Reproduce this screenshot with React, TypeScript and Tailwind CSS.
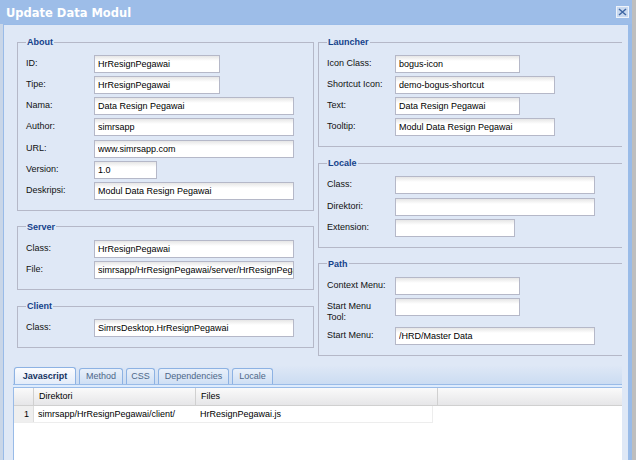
import React from 'react';

interface FieldProps {
  label: string;
  value?: string;
  w: string;
}

const inputCls =
  'h-[18px] shrink-0 border border-[#b5b8c8] bg-[linear-gradient(to_bottom,#e6e6e6,#ffffff_5px)] pl-[3px] text-[9px] text-black outline-none';

const Field: React.FC<FieldProps> = ({ label, value = '', w }) => (
  <div className="flex items-start">
    <label className="w-[68px] shrink-0 pr-[5px] pt-[3px] leading-[11.5px] text-[#111]">{label}</label>
    <input readOnly value={value} className={`${inputCls} ${w}`} />
  </div>
);

const FieldSet: React.FC<{ title: string; right?: boolean; children: React.ReactNode }> = ({ title, right, children }) => (
  <fieldset
    className={`mb-[10px] border border-[#b5b8c8] px-[8px] pt-[7px] pb-[10px] ${right ? 'border-r-0' : ''}`}
  >
    <legend className="px-[1px] text-[9px] font-bold leading-[12px] text-[#15428b]">{title}</legend>
    <div className="flex flex-col gap-[3.17px]">{children}</div>
  </fieldset>
);

const tabs = [
  { name: 'Javascript', w: 'w-[62px]' },
  { name: 'Method', w: 'w-[44px]' },
  { name: 'CSS', w: 'w-[29px]' },
  { name: 'Dependencies', w: 'w-[71px]' },
  { name: 'Locale', w: 'w-[41px]' },
];

const App: React.FC = () => {
  return (
    <div className="flex h-[460px] w-[636px] overflow-hidden bg-[#bebebe] font-['Liberation_Sans',Arial,sans-serif] text-[9px]">
      <div className="flex w-[632px] flex-col bg-[#c9d6e8]">
        {/* title bar */}
        <div className="flex h-[24px] shrink-0 items-start justify-between bg-[#9dbde8] pl-[6px] pt-[2px]">
          <span className="font-['DejaVu_Sans',sans-serif] text-[11.5px] font-bold leading-[22px] text-white">
            Update Data Modul
          </span>
          <div className="mr-[3px] mt-[4px] flex h-[12px] w-[13px] items-center justify-center border border-[#eef3fa] bg-[#c8d9f0]">
            <svg width="9" height="8" viewBox="0 0 9 8">
              <path d="M1 1 L8 7 M8 1 L1 7" stroke="#3f66a3" strokeWidth="1.5" />
            </svg>
          </div>
        </div>

        {/* body */}
        <div className="ml-[3px] flex flex-1 flex-col overflow-hidden border-l border-t border-r-[4px] border-[#99bbe8] bg-[#dfe8f6]">
          <div className="flex h-[340px] shrink-0 gap-[4px] overflow-hidden pl-[13px] pt-[11px]">
            <div className="flex w-[297px] shrink-0 flex-col">
              <FieldSet title="About">
                <Field label="ID:" value="HrResignPegawai" w="w-[126px]" />
                <Field label="Tipe:" value="HrResignPegawai" w="w-[126px]" />
                <Field label="Nama:" value="Data Resign Pegawai" w="w-[200px]" />
                <Field label="Author:" value="simrsapp" w="w-[200px]" />
                <Field label="URL:" value="www.simrsapp.com" w="w-[200px]" />
                <Field label="Version:" value="1.0" w="w-[63px]" />
                <Field label="Deskripsi:" value="Modul Data Resign Pegawai" w="w-[200px]" />
              </FieldSet>
              <FieldSet title="Server">
                <Field label="Class:" value="HrResignPegawai" w="w-[200px]" />
                <Field label="File:" value="simrsapp/HrResignPegawai/server/HrResignPegawai.php" w="w-[200px]" />
              </FieldSet>
              <FieldSet title="Client">
                <Field label="Class:" value="SimrsDesktop.HrResignPegawai" w="w-[200px]" />
              </FieldSet>
            </div>
            <div className="flex w-[304px] shrink-0 flex-col">
              <FieldSet title="Launcher" right>
                <Field label="Icon Class:" value="bogus-icon" w="w-[125px]" />
                <Field label="Shortcut Icon:" value="demo-bogus-shortcut" w="w-[160px]" />
                <Field label="Text:" value="Data Resign Pegawai" w="w-[125px]" />
                <Field label="Tooltip:" value="Modul Data Resign Pegawai" w="w-[160px]" />
              </FieldSet>
              <FieldSet title="Locale" right>
                <Field label="Class:" w="w-[200px]" />
                <Field label="Direktori:" w="w-[200px]" />
                <Field label="Extension:" w="w-[120px]" />
              </FieldSet>
              <FieldSet title="Path" right>
                <Field label="Context Menu:" w="w-[125px]" />
                <Field label="Start Menu Tool:" w="w-[125px]" />
                <Field label="Start Menu:" value="/HRD/Master Data" w="w-[200px]" />
              </FieldSet>
            </div>
          </div>

          {/* tab panel */}
          <div className="ml-[9px] mr-[6px] flex flex-1 flex-col">
            <div className="flex h-[19px] shrink-0 items-end gap-[3px] bg-[linear-gradient(to_bottom,#dfe8f6,#cbdcf2)] pl-[1px]">
              {tabs.map((t, i) =>
                i === 0 ? (
                  <div
                    key={t.name}
                    className={`${t.w} flex h-[17px] items-center justify-center rounded-t-[3px] border border-b-0 border-[#8db2e3] bg-[linear-gradient(to_bottom,#fbfcfe,#e3ecf9)] pt-[1px] font-bold text-[#15325f]`}
                  >
                    {t.name}
                  </div>
                ) : (
                  <div
                    key={t.name}
                    className={`${t.w} flex h-[16px] items-center justify-center rounded-t-[3px] border border-b-0 border-[#8db2e3] bg-[linear-gradient(to_bottom,#e9f0fa,#cfdff4)] pt-[1px] text-[#4e6788]`}
                  >
                    {t.name}
                  </div>
                )
              )}
            </div>
            <div className="h-[4px] shrink-0 border-y border-[#99bbe8] bg-[#deecfd]" />
            <div className="flex-1 border-l border-[#99bbe8] bg-white">
              <div className="flex h-[18px] border-b border-[#d0d0d0] bg-[linear-gradient(to_bottom,#fafafa,#e6e6e8)] text-black">
                <div className="w-[20px] shrink-0 border-r border-[#d0d0d0]" />
                <div className="w-[162px] shrink-0 border-r border-[#d0d0d0] pl-[5px] leading-[17px]">Direktori</div>
                <div className="w-[242px] shrink-0 border-r border-[#d0d0d0] pl-[5px] leading-[17px]">Files</div>
              </div>
              <div className="flex h-[17px] w-[419px] border-b border-r border-[#ededed] text-black">
                <div className="w-[20px] shrink-0 border-r border-[#dddddd] bg-[#efefef] pr-[4px] text-right leading-[16px]">
                  1
                </div>
                <div className="w-[162px] shrink-0 pl-[4px] leading-[16px]">simrsapp/HrResignPegawai/client/</div>
                <div className="flex-1 pl-[4px] leading-[16px]">HrResignPegawai.js</div>
              </div>
            </div>
          </div>
        </div>
      </div>
    </div>
  );
};

export default App;
